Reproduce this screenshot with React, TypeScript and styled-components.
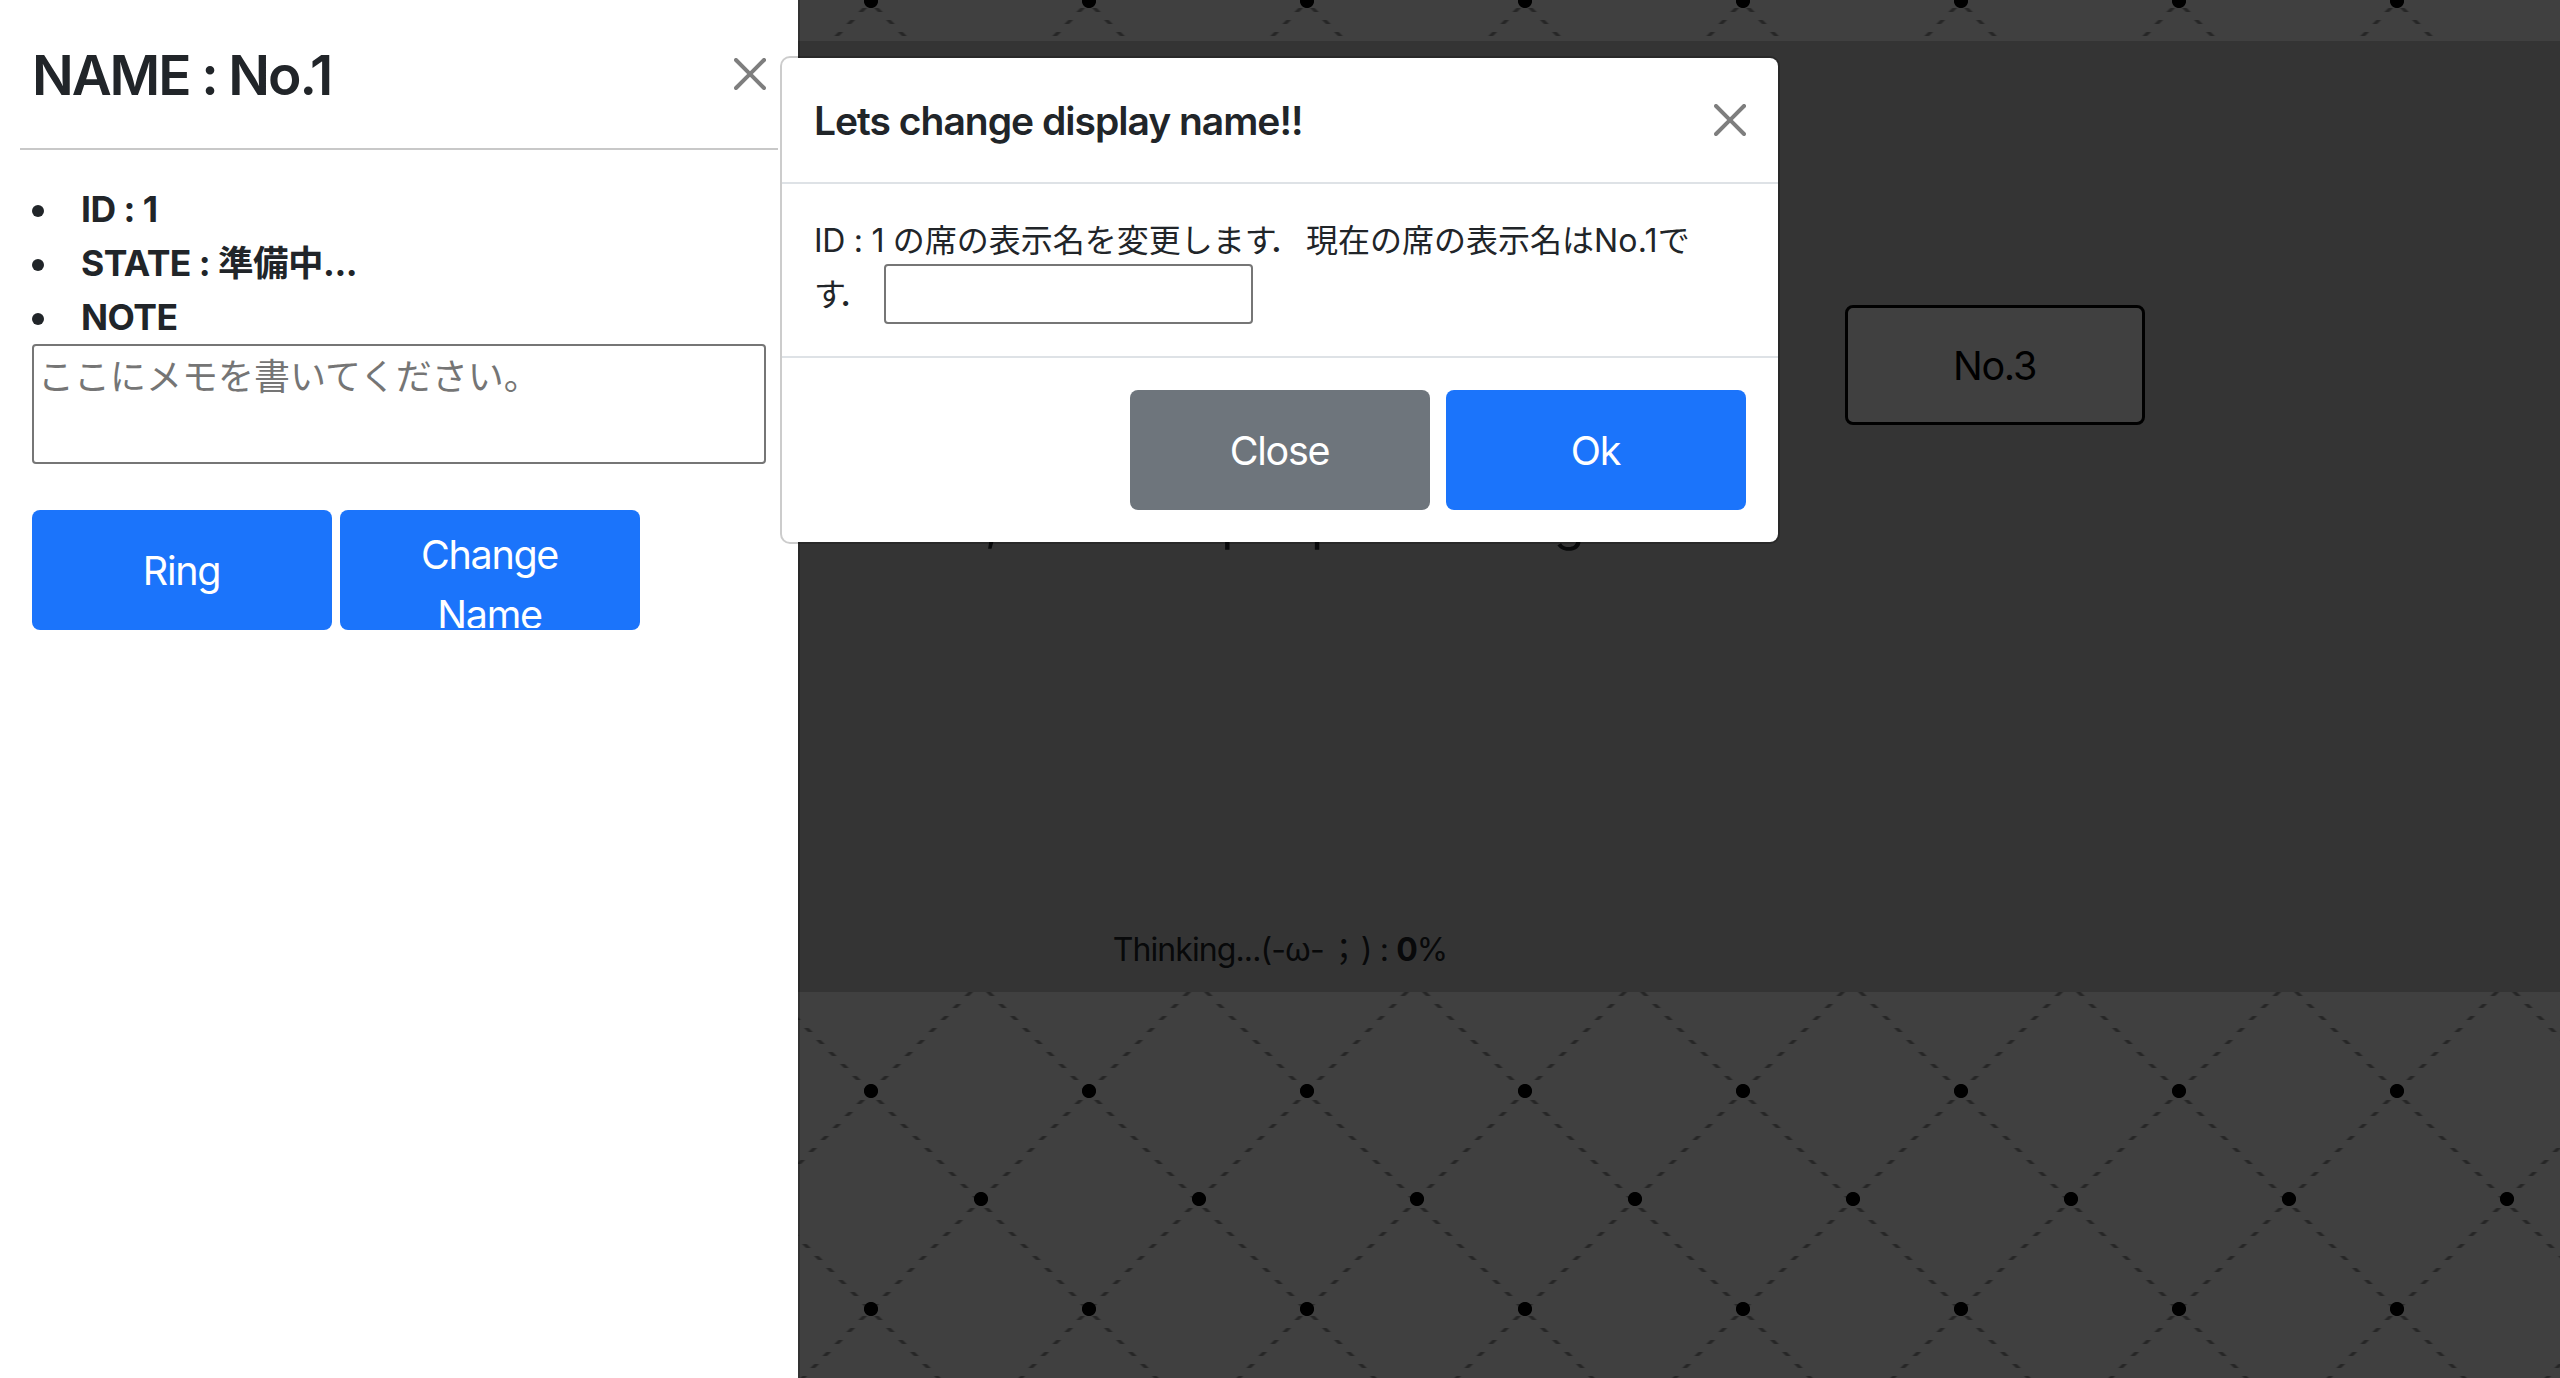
import React from "react";
import styled, { createGlobalStyle, css } from "styled-components";

const GlobalStyle = createGlobalStyle`
  *, *::before, *::after { box-sizing: border-box; }
  html, body { margin: 0; height: 100%; overflow: hidden; }
  body {
    font-family: Inter, "Noto Sans CJK JP", sans-serif;
    font-size: 32px;
    line-height: 1.5;
    color: #212529;
    background: #fff;
  }
`;

const Page = styled.div`
  position: relative;
  height: 1378px;
  overflow: hidden;
  padding-top: 41px;
  background:
    radial-gradient(circle at 50% 50%, #000 6.6px, transparent 7.5px) 108px -108px / 218px 218px,
    radial-gradient(circle at 50% 50%, #000 6.6px, transparent 7.5px) 0 0 / 218px 218px,
    repeating-linear-gradient(180deg, #fff 0 8px, transparent 8px 12px),
    linear-gradient(45deg, transparent 49.2%, #999 49.7%, #999 50.3%, transparent 50.8%) -3.6px 0 / 218px 218px,
    linear-gradient(135deg, transparent 49.2%, #999 49.7%, #999 50.3%, transparent 50.8%) 0.7px 0 / 218px 218px,
    #fff;
`;

const Board = styled.main`
  display: flex;
  flex-direction: column;
  align-items: center;
  height: 951px;
  padding-top: 264px;
  background: #d0d0d0;
`;

const SeatRow = styled.div`
  display: grid;
  grid-template-columns: repeat(3, 715px);
  justify-items: center;
`;

const Headline = styled.p`
  margin: 59px 0 0;
  font-size: 50px;
  line-height: 76px;
  white-space: nowrap;
`;

const HeadlineLead = styled.span`
  letter-spacing: -1.6px;
`;

const Status = styled.p`
  margin: 366px 0 0;
  font-size: 32px;
  line-height: 48px;
  letter-spacing: -0.9px;
  white-space: nowrap;
`;

const Sweat = styled.span`
  margin: 0 2px 0 4px;
`;

const buttonTone = {
  primary: css`
    background: #1b74fb;
    color: #fff;
  `,
  secondary: css`
    background: #6e757c;
    color: #fff;
  `,
  seat: css`
    background: #fff;
    color: #000;
    border: 3px solid #000;
  `,
};

const Button = styled.button<{ $tone: keyof typeof buttonTone }>`
  display: flex;
  flex-direction: column;
  justify-content: safe center;
  width: 300px;
  height: 120px;
  padding: 13px 13px 11px 12px;
  border: 2px solid transparent;
  border-radius: 8px;
  overflow: hidden;
  font-family: inherit;
  font-size: 39.5px;
  line-height: 60px;
  letter-spacing: -1.3px;
  text-align: center;
  ${({ $tone }) => buttonTone[$tone]}
`;

const ButtonLabel = styled.span`
  width: 100%;
  padding: 0 40px;
`;

const Backdrop = styled.div`
  position: absolute;
  inset: 0;
  background: rgba(0, 0, 0, 0.75);
`;

const SidePanel = styled.aside`
  position: absolute;
  top: 0;
  left: 0;
  width: 800px;
  height: 1378px;
  background: #fff;
  background-clip: padding-box;
  border-right: 2px solid rgba(0, 0, 0, 0.2);
`;

const PanelHeader = styled.header`
  display: flex;
  justify-content: space-between;
  align-items: center;
  height: 148px;
  padding: 0 32px;
`;

const PanelTitle = styled.h5`
  margin: 2px 0 0;
  font-size: 55px;
  font-weight: 560;
  line-height: 84px;
  letter-spacing: -2.1px;
`;

const Divider = styled.hr`
  width: 758px;
  height: 2px;
  margin: 0 0 0 20px;
  border: 0;
  background: #c8c8c8;
`;

const PanelBody = styled.div`
  padding: 32px;
`;

const Facts = styled.ul`
  margin: 0;
  padding: 0;
  list-style: none;
`;

const Fact = styled.li`
  display: flex;
  align-items: center;
  height: 54px;
  padding-top: 1px;
  font-size: 35.5px;
  font-weight: 680;
  letter-spacing: -0.5px;
  white-space: pre;

  &::before {
    content: "";
    width: 12px;
    height: 12px;
    margin: 3px 37px 0 0;
    border-radius: 50%;
    background: #212529;
  }
`;

const Note = styled.textarea`
  display: block;
  width: 734px;
  height: 120px;
  margin: 0 0 46px;
  padding: 4px;
  border: 2px solid #767676;
  border-radius: 4px;
  resize: none;
  font-family: inherit;
  font-size: 36px;
  line-height: 54px;

  &::placeholder {
    color: #757575;
    opacity: 1;
  }
`;

const PanelActions = styled.div`
  display: flex;
  gap: 8px;
`;

const CloseButton = styled.button`
  display: flex;
  padding: 0;
  border: 0;
  background: none;
  color: #000;
  opacity: 0.5;
`;

const Dialog = styled.section`
  position: absolute;
  top: 56px;
  left: 780px;
  width: 1000px;
  background: #fff;
  background-clip: padding-box;
  border: 2px solid rgba(0, 0, 0, 0.2);
  border-radius: 10px;
`;

const DialogHeader = styled.header`
  display: flex;
  justify-content: space-between;
  align-items: center;
  height: 126px;
  padding: 32px;
  border-bottom: 2px solid #dee2e6;
`;

const DialogTitle = styled.h5`
  margin: 2px 0 0;
  font-size: 39px;
  font-weight: 560;
  line-height: 60px;
  letter-spacing: -1px;
`;

const DialogBody = styled.div`
  padding: 32px;
`;

const Line = styled.div<{ $height: number }>`
  display: flex;
  align-items: center;
  height: ${({ $height }) => $height}px;
  white-space: pre;
`;

const LineText = styled.span`
  padding-top: 2px;
`;

const Latin = styled.span<{ $spacing?: number }>`
  letter-spacing: ${({ $spacing = 0 }) => $spacing}px;
`;

const BeforeStop = styled.span`
  letter-spacing: -8px;
`;

const Stop = styled.span`
  letter-spacing: 5px;
`;

const NameInput = styled.input`
  width: 369px;
  height: 60px;
  margin-left: 8.5px;
  padding: 2px 4px;
  border: 2px solid #767676;
  border-radius: 4px;
  font: inherit;
`;

const DialogFooter = styled.footer`
  display: flex;
  justify-content: flex-end;
  gap: 16px;
  padding: 32px;
  border-top: 2px solid #dee2e6;
`;

function CloseIcon() {
  return (
    <svg width="32" height="32" viewBox="0 0 16 16" fill="currentColor">
      <path d="M.293.293a1 1 0 011.414 0L8 6.586 14.293.293a1 1 0 111.414 1.414L9.414 8l6.293 6.293a1 1 0 01-1.414 1.414L8 9.414l-6.293 6.293a1 1 0 01-1.414-1.414L6.586 8 .293 1.707a1 1 0 010-1.414z" />
    </svg>
  );
}

export default function App() {
  return (
    <>
      <GlobalStyle />
      <Page>
        <Board>
          <SeatRow>
            {["No.1", "No.2", "No.3"].map((seat) => (
              <Button key={seat} $tone="seat">
                <ButtonLabel>{seat}</ButtonLabel>
              </Button>
            ))}
          </SeatRow>
          <Headline>
            Now,<HeadlineLead> there are </HeadlineLead>people thinking 0%
          </Headline>
          <Status>
            Thinking...(-ω-<Sweat>；</Sweat>) : <b>0</b>%
          </Status>
        </Board>

        <Backdrop />

        <SidePanel>
          <PanelHeader>
            <PanelTitle>NAME : No.1</PanelTitle>
            <CloseButton aria-label="Close">
              <CloseIcon />
            </CloseButton>
          </PanelHeader>
          <Divider />
          <PanelBody>
            <Facts>
              <Fact>ID : 1</Fact>
              <Fact>STATE : 準備中...</Fact>
              <Fact>NOTE</Fact>
            </Facts>
            <Note placeholder="ここにメモを書いてください。" />
            <PanelActions>
              <Button $tone="primary">
                <ButtonLabel>Ring</ButtonLabel>
              </Button>
              <Button $tone="primary">
                <ButtonLabel>Change Name</ButtonLabel>
              </Button>
            </PanelActions>
          </PanelBody>
        </SidePanel>

        <Dialog>
          <DialogHeader>
            <DialogTitle>Lets change display name!!</DialogTitle>
            <CloseButton aria-label="Close">
              <CloseIcon />
            </CloseButton>
          </DialogHeader>
          <DialogBody>
            <Line $height={48}>
              <LineText>
                <Latin $spacing={-0.3}>ID : 1 </Latin>の席の表示名を変更しま<BeforeStop>す</BeforeStop>
                <Stop>．</Stop>現在の席の表示名は<Latin $spacing={0.3}>No.1</Latin>で
              </LineText>
            </Line>
            <Line $height={60}>
              <LineText>
                <BeforeStop>す</BeforeStop>
                <Stop>．</Stop>
              </LineText>
              <NameInput />
            </Line>
          </DialogBody>
          <DialogFooter>
            <Button $tone="secondary">
              <ButtonLabel>Close</ButtonLabel>
            </Button>
            <Button $tone="primary">
              <ButtonLabel>Ok</ButtonLabel>
            </Button>
          </DialogFooter>
        </Dialog>
      </Page>
    </>
  );
}
